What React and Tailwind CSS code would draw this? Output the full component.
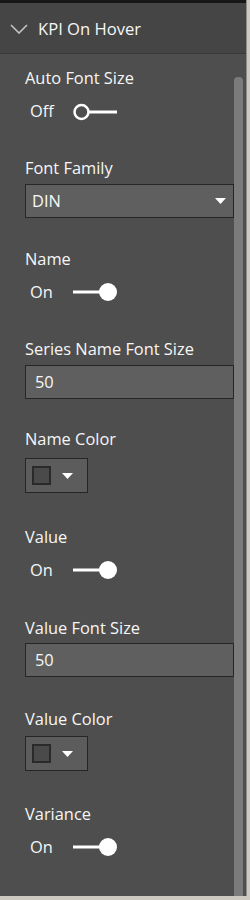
import React from "react";

const font = { fontFamily: '"Open Sans", "Noto Sans", sans-serif' };

function Label({ children, className = "" }) {
  return (
    <div className={"h-5 leading-5 text-[16.4px] font-medium text-[#f6f6f6] whitespace-nowrap " + className}>
      {children}
    </div>
  );
}

function Toggle({ on, className = "" }) {
  return (
    <div className={"flex h-5 items-center " + className}>
      <span className="w-[48px] pl-[5px] text-[16.4px] font-medium leading-5 text-[#f6f6f6]">{on ? "On" : "Off"}</span>
      <svg width="46" height="20" viewBox="0 0 46 20">
        {on ? (
          <>
            <line x1="0" y1="10" x2="34" y2="10" stroke="#ffffff" strokeWidth="3" />
            <circle cx="35" cy="10" r="9" fill="#ffffff" />
          </>
        ) : (
          <>
            <line x1="16" y1="11" x2="44" y2="11" stroke="#ffffff" strokeWidth="3" />
            <circle cx="8.5" cy="11" r="7" fill="#4e4e4e" stroke="#ffffff" strokeWidth="2.5" />
          </>
        )}
      </svg>
    </div>
  );
}

function Caret() {
  return (
    <svg width="11" height="6" viewBox="0 0 11 6">
      <polygon points="0,0 11,0 5.5,6" fill="#ffffff" />
    </svg>
  );
}

function Dropdown({ value, className = "" }) {
  return (
    <div className={"flex h-[34px] w-[209px] items-center justify-between border-[1.5px] border-[#262626] bg-[#5f5f5f] pl-[6px] pr-[7px] " + className}>
      <span className="text-[16.4px] font-medium leading-5 text-[#f6f6f6]">{value}</span>
      <Caret />
    </div>
  );
}

function Input({ value, className = "" }) {
  return (
    <div className={"flex h-[34px] w-[209px] items-center border-[1.5px] border-[#262626] bg-[#5f5f5f] pl-[9px] " + className}>
      <span className="text-[16.4px] font-medium leading-5 text-[#f6f6f6]">{value}</span>
    </div>
  );
}

function ColorPick({ className = "" }) {
  return (
    <div className={"flex h-[35px] w-[63px] items-center border-[1.5px] border-[#262626] bg-[#5c5c5c] pl-[6px] " + className}>
      <div className="h-[19px] w-[19px] border-2 border-[#2a2a2a] bg-[#4a4a4a]" />
      <div className="ml-[11px] flex items-center">
        <Caret />
      </div>
    </div>
  );
}

export default function App() {
  return (
    <div className="h-[900px] w-[250px] bg-[#cdc9c1]" style={font}>
      <div className="flex h-[896px] w-[247px] flex-col border-r border-[#8d8d8d] bg-[#4e4e4e]">
        <div className="h-[3px] bg-[#161616]" />
        <div className="flex h-[51px] items-center border-b border-[#383838] bg-[#454545] pt-[2px]">
          <svg width="18" height="10" viewBox="0 0 18 10" className="ml-[10px]">
            <polyline points="1,1 9,9 17,1" fill="none" stroke="#c4c4c4" strokeWidth="1.6" />
          </svg>
          <span className="ml-[10px] text-[16.6px] font-medium leading-5 text-[#f6f6f6]">KPI On Hover</span>
        </div>
        <div className="flex flex-1 min-h-0">
          <div className="flex w-[234px] flex-col pl-[25px]">
            <Label className="mt-[14px]">Auto Font Size</Label>
            <Toggle on={false} className="mt-[13px]" />
            <Label className="mt-[37px]">Font Family</Label>
            <Dropdown value="DIN" className="mt-[6px]" />
            <Label className="mt-[31px]">Name</Label>
            <Toggle on className="mt-[13px]" />
            <Label className="mt-[37px]">Series Name Font Size</Label>
            <Input value="50" className="mt-[6px]" />
            <Label className="mt-[30px]">Name Color</Label>
            <ColorPick className="mt-[9px]" />
            <Label className="mt-[34px]">Value</Label>
            <Toggle on className="mt-[13px]" />
            <Label className="mt-[38px]">Value Font Size</Label>
            <Input value="50" className="mt-[5px]" />
            <Label className="mt-[32px]">Value Color</Label>
            <ColorPick className="mt-[7px]" />
            <Label className="mt-[33px]">Variance</Label>
            <Toggle on className="mt-[13px]" />
          </div>
          <div className="flex w-[12px] flex-col pt-[23px]">
            <div className="flex-1 w-[9px] rounded-t-[4px] bg-[#7b7b7b]" />
          </div>
        </div>
      </div>
    </div>
  );
}
